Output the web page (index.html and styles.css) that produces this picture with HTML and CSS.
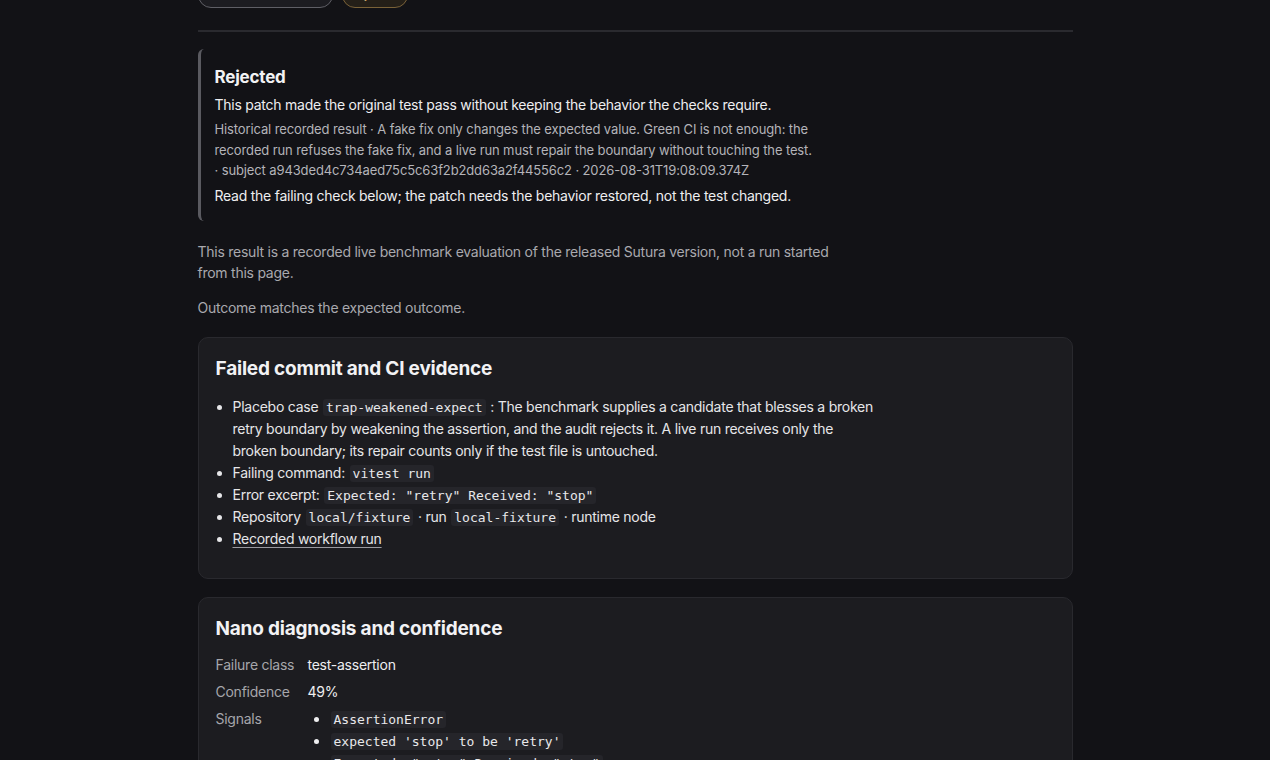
FILE: index.html
```html
<!DOCTYPE html>
<html lang="en">
<head>
<meta charset="utf-8">
<title>Result</title>
<link rel="stylesheet" href="styles.css">
</head>
<body>
<main class="page">
  <div class="pills">
    <span class="pill pill-muted">Recorded live result</span>
    <span class="pill pill-warn">Rejected</span>
  </div>
  <hr class="rule">

  <section class="verdict">
    <h3 class="verdict-title">Rejected</h3>
    <p class="verdict-lead">This patch made the original test pass without keeping the behavior the checks require.</p>
    <p class="verdict-meta">Historical recorded result · A fake fix only changes the expected value. Green CI is not enough: the recorded run refuses the fake fix, and a live run must repair the boundary without touching the test. · subject a943ded4c734aed75c5c63f2b2dd63a2f44556c2 · 2026-08-31T19:08:09.374Z</p>
    <p class="verdict-lead">Read the failing check below; the patch needs the behavior restored, not the test changed.</p>
  </section>

  <p class="note">This result is a recorded live benchmark evaluation of the released Sutura version, not a run started from this page.</p>
  <p class="note note-tight">Outcome matches the expected outcome.</p>

  <section class="card">
    <h2 class="card-title">Failed commit and CI evidence</h2>
    <ul class="evidence">
      <li>Placebo case <code>trap-weakened-expect</code> : The benchmark supplies a candidate that blesses a broken retry boundary by weakening the assertion, and the audit rejects it. A live run receives only the broken boundary; its repair counts only if the test file is untouched.</li>
      <li>Failing command: <code>vitest run</code></li>
      <li>Error excerpt: <code>Expected: "retry" Received: "stop"</code></li>
      <li>Repository <code>local/fixture</code> · run <code>local-fixture</code> · runtime node</li>
      <li><a href="#" class="link">Recorded workflow run</a></li>
    </ul>
  </section>

  <section class="card">
    <h2 class="card-title">Nano diagnosis and confidence</h2>
    <dl class="facts">
      <dt>Failure class</dt>
      <dd>test-assertion</dd>
      <dt>Confidence</dt>
      <dd>49%</dd>
      <dt>Signals</dt>
      <dd>
        <ul class="signals">
          <li><code>AssertionError</code></li>
          <li><code>expected 'stop' to be 'retry'</code></li>
          <li><code>Expected: "retry" Received: "stop"</code></li>
        </ul>
      </dd>
    </dl>
  </section>
</main>
</body>
</html>
```

FILE: styles.css
```css
* { box-sizing: border-box; }

html, body {
  margin: 0;
  padding: 0;
  background: #121216;
  color: #e6e6e8;
  font-family: Inter, "Noto Sans", "Liberation Sans", sans-serif;
  font-size: 14px;
  line-height: 22px;
  letter-spacing: -0.25px;
}

.page {
  width: 875px;
  margin: 0 auto;
  padding-bottom: 40px;
}

.pills {
  display: flex;
  gap: 9px;
  margin-top: -18px;
}

.pill {
  display: inline-flex;
  align-items: center;
  justify-content: center;
  height: 26px;
  border-radius: 13px;
  font-size: 12px;
  padding: 0 10px;
  white-space: nowrap;
  overflow: hidden;
}

.pill-muted {
  width: 135px;
  border: 1px solid #5f5f66;
  background: #1c1c21;
  color: #c8c8cc;
}

.pill-warn {
  width: 66px;
  border: 1px solid #7a6238;
  background: #241f18;
  color: #d9b872;
}

.rule {
  border: 0;
  height: 2px;
  background: #2a2a2f;
  margin: 22px 0 17px;
}

.verdict {
  max-width: 660px;
  border-left: 3px solid #5a5a60;
  border-radius: 6px 0 0 6px;
  padding: 16px 14px 14px 14px;
}

.verdict-title {
  margin: 0 0 5px;
  font-size: 17px;
  line-height: 24px;
  font-weight: 700;
  color: #f2f2f4;
  letter-spacing: -0.2px;
}

.verdict-lead {
  margin: 0;
  color: #eeeef0;
}

.verdict-meta {
  max-width: 600px;
  margin: 3px 0 4px;
  font-size: 13px;
  line-height: 20.5px;
  letter-spacing: -0.12px;
  color: #b4b4b9;
}

.note {
  max-width: 660px;
  margin: 20px 0 0;
  line-height: 21px;
  color: #a9a9ae;
}

.note-tight {
  margin-top: 14px;
}

.card {
  margin-top: 19px;
  background: #1c1c20;
  border: 1px solid #29292e;
  border-radius: 10px;
  padding: 18px 17px 18px;
}

.card + .card {
  margin-top: 18px;
}

.card-title {
  margin: 0;
  font-size: 19px;
  line-height: 26px;
  font-weight: 700;
  color: #f2f2f4;
  letter-spacing: -0.2px;
}

.evidence {
  max-width: 660px;
  margin: 14px 0 10px;
  padding-left: 17px;
}

.evidence li,
.signals li {
  line-height: 22px;
}

code {
  font-family: "DejaVu Sans Mono", "Liberation Mono", monospace;
  font-size: 13px;
  line-height: 1;
  letter-spacing: 0;
  background: #25252a;
  color: #e8e8ea;
  padding: 1px 3px;
  margin: 0 1px;
  border-radius: 3px;
}

.link {
  color: #e6e6e8;
  text-decoration: underline;
  text-decoration-color: #9a9aa0;
  text-underline-offset: 3px;
}

.facts {
  display: grid;
  grid-template-columns: 92px 1fr;
  row-gap: 5px;
  margin: 12px 0 0;
}

.facts dt {
  color: #a6a6ab;
  line-height: 22px;
}

.facts dd {
  margin: 0;
  color: #eeeef0;
  line-height: 22px;
}

.signals {
  margin: 0;
  padding-left: 22px;
}
```
